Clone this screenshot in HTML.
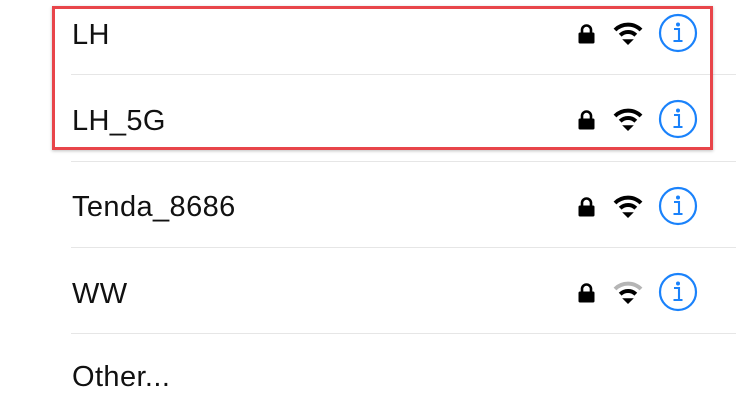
<!DOCTYPE html>
<html><head><style>
body{margin:0;width:736px;height:402px;background:#fff;position:relative;overflow:hidden;font-family:"Liberation Sans",Arial,sans-serif}
.t{position:absolute;left:72px;font-size:29px;letter-spacing:0.4px;color:#111;line-height:30px}
.sep{position:absolute;left:71px;right:0;height:1px;background:#e6e6e6}
.ic{position:absolute;left:574px;width:130px;height:44px}
.box{position:absolute;left:52px;top:6px;width:655px;height:138px;border:3px solid #e8454a;box-shadow:0 1px 3px rgba(0,0,0,.25)}
</style></head><body>
<div class="t" style="top:20px">LH</div>
<div class="sep" style="top:74px"></div>
<div class="t" style="top:106px">LH_5G</div>
<div class="sep" style="top:161px"></div>
<div class="t" style="top:192px">Tenda_8686</div>
<div class="sep" style="top:247px"></div>
<div class="t" style="top:279px">WW</div>
<div class="sep" style="top:333px"></div>
<div class="t" style="top:362px">Other...</div>

<svg width="0" height="0" style="position:absolute">
<defs>
<g id="lock"><path d="M7 10V7a4.5 4.5 0 0 1 9 0v3" fill="none" stroke="#000" stroke-width="2.6"/><rect x="3.5" y="9.5" width="16" height="11" rx="1.5" fill="#000"/></g>
<g id="info"><circle cx="20" cy="20" r="18" fill="none" stroke="#1a82fb" stroke-width="2.2"/><circle cx="20" cy="11.5" r="2" fill="#1a82fb"/><path d="M16 16h5v12M15.5 28h9" fill="none" stroke="#1a82fb" stroke-width="2.1"/></g>
<g id="wifi" fill="none" stroke-width="4"><path d="M-13 -14a18.5 18.5 0 0 1 26 0"/><path d="M-7.8 -8.8a11 11 0 0 1 15.6 0"/></g>
</defs></svg>

<div class="ic" style="top:11px">
<svg width="130" height="44" viewBox="0 0 130 44"><use href="#lock" x="1" y="12"/>
<g transform="translate(54,33)" stroke="#000"><use href="#wifi"/><path d="M-4 -4 L0 0 L4 -4Z" fill="#000" stroke-width="1.5"/></g>
<use href="#info" x="84" y="2"/></svg></div>

<div class="ic" style="top:97px">
<svg width="130" height="44" viewBox="0 0 130 44"><use href="#lock" x="1" y="12"/>
<g transform="translate(54,33)" stroke="#000"><use href="#wifi"/><path d="M-4 -4 L0 0 L4 -4Z" fill="#000" stroke-width="1.5"/></g>
<use href="#info" x="84" y="2"/></svg></div>

<div class="ic" style="top:184px">
<svg width="130" height="44" viewBox="0 0 130 44"><use href="#lock" x="1" y="12"/>
<g transform="translate(54,33)" stroke="#000"><use href="#wifi"/><path d="M-4 -4 L0 0 L4 -4Z" fill="#000" stroke-width="1.5"/></g>
<use href="#info" x="84" y="2"/></svg></div>

<div class="ic" style="top:270px">
<svg width="130" height="44" viewBox="0 0 130 44"><use href="#lock" x="1" y="12"/>
<g transform="translate(54,33)" fill="none" stroke-width="4"><path d="M-13 -14a18.5 18.5 0 0 1 26 0" stroke="#b5b5b5"/><path d="M-7.8 -8.8a11 11 0 0 1 15.6 0" stroke="#000"/><path d="M-4 -4 L0 0 L4 -4Z" fill="#000" stroke="#000" stroke-width="1.5"/></g>
<use href="#info" x="84" y="2"/></svg></div>

<div class="box"></div>
</body></html>
